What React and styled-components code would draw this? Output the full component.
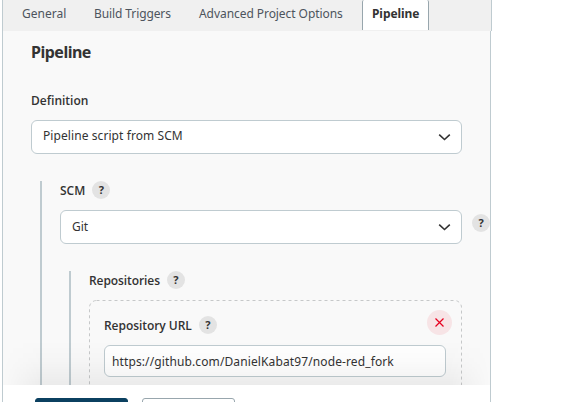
import React from "react";
import styled, { createGlobalStyle } from "styled-components";

const Global = createGlobalStyle`
  * { box-sizing: border-box; }
  html, body { margin: 0; background: #fff; overflow: hidden; }
  body { font: 400 12px/18px "Noto Sans", "Open Sans", sans-serif; color: #333; }
`;

const Page = styled.div`
  width: 582px;
  height: 402px;
  padding-left: 2px;
  display: flex;
  flex-direction: column;
  overflow: hidden;
`;

const TabBar = styled.nav`
  width: 490px;
  height: 31px;
  flex: none;
  display: flex;
  background: #f0f0f0;
  border: solid #bfcbd0;
  border-width: 0 1px;
`;

const Tab = styled.a`
  width: ${(p) => p.$width}px;
  height: ${(p) => (p.$active ? 30 : 31)}px;
  padding: 5px 0 0 ${(p) => p.$inset}px;
  white-space: nowrap;
  letter-spacing: ${(p) => p.$spacing || 0}px;
  color: ${(p) => (p.$active ? "#333" : "#4d545d")};
  font-weight: ${(p) => (p.$active ? 700 : 400)};
  background: ${(p) => (p.$active ? "#fff" : "transparent")};
  border: solid ${(p) => (p.$active ? "#98a6ad" : "transparent")};
  border-width: 0 ${(p) => (p.$active ? "1px" : "0")};
  border-radius: 2px 2px 0 0;
`;

const Panel = styled.main`
  width: 489px;
  height: 354px;
  flex: none;
  position: relative;
  overflow: hidden;
  padding: 11px 0 0 28px;
  background: #f9f9f9;
  border: solid #bfcbd0;
  border-width: 0 1px;
`;

const Title = styled.h2`
  margin: 0;
  font-size: 16px;
  line-height: 20px;
  font-weight: 700;
  letter-spacing: -0.5px;
`;

const Label = styled.div`
  display: flex;
  align-items: center;
  gap: 7px;
  height: 18px;
  font: 600 12px/18px "Open Sans", "Noto Sans", sans-serif;
  white-space: nowrap;
  letter-spacing: ${(p) => p.$spacing || 0}px;
`;

const LabelText = styled.span`
  padding-top: 2px;
`;

const DefinitionField = styled.section`
  margin-top: 29px;
`;

const Select = styled.div`
  width: ${(p) => p.$width}px;
  height: 34px;
  flex: none;
  display: flex;
  justify-content: space-between;
  padding: ${(p) => p.$padTop || 6}px 10px 0 11px;
  background: #fff;
  border: 1px solid #bfcbd0;
  border-radius: 6px;
  letter-spacing: ${(p) => p.$spacing || 0}px;

  svg { margin-top: ${(p) => 12 - (p.$padTop || 6)}px; }
`;

const Nested = styled.section`
  width: 450px;
  height: ${(p) => p.$height}px;
  margin: 27px 0 0 9px;
  padding-left: ${(p) => p.$inset}px;
  border-left: 2px solid #bfcbd0;
`;

const SelectRow = styled.div`
  display: flex;
  align-items: center;
  gap: 10px;
  margin-top: 11px;
`;

const HelpDot = styled.span`
  width: 18px;
  height: 18px;
  flex: none;
  border-radius: 50%;
  background: #e3e3e3;
  font: 700 11px/18px "Noto Sans", sans-serif;
  letter-spacing: 0;
  text-align: center;
  margin-top: ${(p) => (p.$raised ? -8 : 0)}px;
`;

const RepoCard = styled.div`
  position: relative;
  width: 373px;
  height: 130px;
  margin-top: 11px;
  padding: 16px 15px 0;

  > svg { position: absolute; inset: 0; }
`;

const RepoHead = styled.div`
  display: flex;
  justify-content: space-between;
  height: 29px;
`;

const Remove = styled.button`
  width: 25px;
  height: 25px;
  display: grid;
  place-items: center;
  margin: -6px -5px 0 0;
  padding: 0;
  border: 0;
  border-radius: 50%;
  background: #f7e4e6;
`;

const Input = styled.input`
  display: block;
  width: 342px;
  height: 32px;
  padding: 0 8px 0 7px;
  color: #333;
  font: inherit;
  letter-spacing: 0.115px;
  background: #fff;
  border: 1px solid #bfcbd0;
  border-radius: 6px;
`;

const Shade = styled.div`
  position: absolute;
  inset: auto 0 0;
  height: 44px;
  background: linear-gradient(to bottom, transparent, rgba(0, 0, 0, 0.015) 45%, rgba(0, 0, 0, 0.055));
  mask-image: linear-gradient(to right, transparent, #000 40px, #000 445px, transparent);
`;

const Footer = styled.footer`
  width: 489px;
  height: 17px;
  flex: none;
  display: flex;
  gap: 14px;
  padding: 13px 0 0 32px;
  border: solid #bfcbd0;
  border-width: 0 1px;
  background: #fff;
`;

const Button = styled.button`
  width: 93px;
  height: 34px;
  flex: none;
  border: 1px solid ${(p) => (p.$primary ? "#0b4060" : "#98a6ad")};
  border-radius: 3px;
  background: ${(p) => (p.$primary ? "#0b4060" : "#fff")};
`;

const Chevron = () => (
  <svg width="13" height="9" viewBox="0 0 13 9" fill="none" stroke="#333" strokeWidth="1.6">
    <path d="M1.2 1.6 6.5 6.5 11.8 1.6" />
  </svg>
);

export default function App() {
  return (
    <>
      <Global />
      <Page>
        <TabBar>
          <Tab $width={71} $inset={19}>General</Tab>
          <Tab $width={106} $inset={20} $spacing={-0.1}>Build Triggers</Tab>
          <Tab $width={182} $inset={19} $spacing={-0.06}>Advanced Project Options</Tab>
          <Tab $width={67} $inset={9} $spacing={-0.08} $active>Pipeline</Tab>
        </TabBar>
        <Panel>
          <Title>Pipeline</Title>
          <DefinitionField>
            <Label><LabelText>Definition</LabelText></Label>
            <SelectRow>
              <Select $width={431} $spacing={0.08}>Pipeline script from SCM<Chevron /></Select>
            </SelectRow>
          </DefinitionField>
          <Nested $height={260} $inset={18}>
            <Label><LabelText>SCM</LabelText><HelpDot>?</HelpDot></Label>
            <SelectRow>
              <Select $width={402} $padTop={7}>Git<Chevron /></Select>
              <HelpDot $raised>?</HelpDot>
            </SelectRow>
            <Nested $height={160} $inset={18}>
              <Label $spacing={-0.08}><LabelText>Repositories</LabelText><HelpDot>?</HelpDot></Label>
              <RepoCard>
                <svg width="373" height="130" fill="none" stroke="#c6c8c9" strokeDasharray="3 3">
                  <rect x="0.5" y="0.5" width="372" height="140" rx="7" />
                </svg>
                <RepoHead>
                  <Label $spacing={-0.05}><LabelText>Repository URL</LabelText><HelpDot>?</HelpDot></Label>
                  <Remove aria-label="Remove repository">
                    <svg width="9" height="9" viewBox="0 0 9 9" stroke="#e6001f" strokeWidth="1.2">
                      <path d="M.5.5l8 8M8.5.5l-8 8" />
                    </svg>
                  </Remove>
                </RepoHead>
                <Input readOnly value="https://github.com/DanielKabat97/node-red_fork" />
              </RepoCard>
            </Nested>
          </Nested>
          <Shade />
        </Panel>
        <Footer>
          <Button $primary aria-label="Save" />
          <Button aria-label="Apply" />
        </Footer>
      </Page>
    </>
  );
}
